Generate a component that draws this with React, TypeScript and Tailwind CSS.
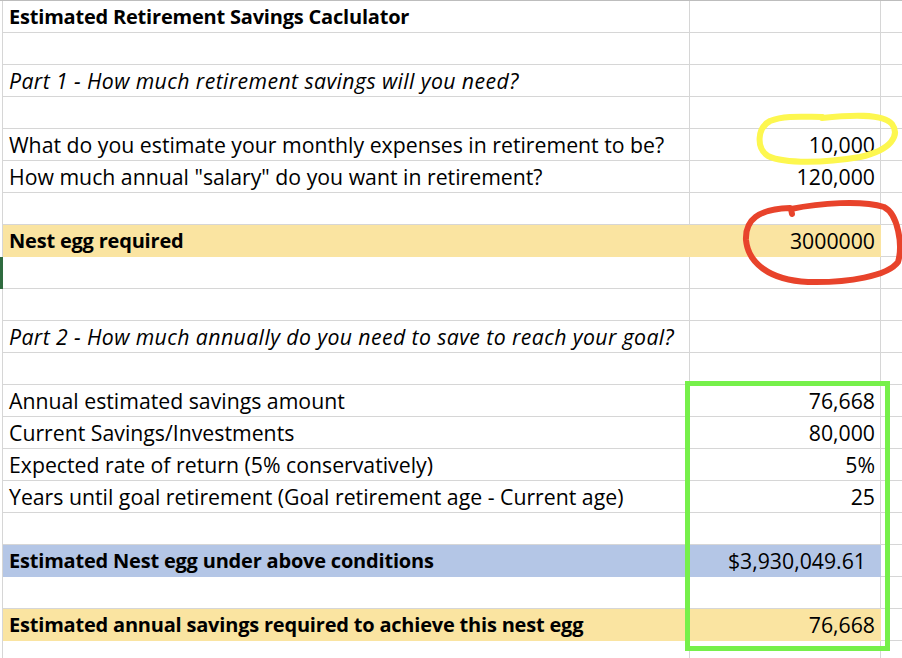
import React from "react";

type Row = {
  label?: string;
  value?: string;
  style?: "bold" | "italic";
  fill?: "yellow" | "blue";
  valuePad?: boolean;
};

const rows: Row[] = [
  { label: "Estimated Retirement Savings Caclulator", style: "bold" },
  {},
  { label: "Part 1 - How much retirement savings will you need?", style: "italic" },
  {},
  { label: "What do you estimate your monthly expenses in retirement to be?", value: "10,000" },
  { label: 'How much annual "salary" do you want in retirement?', value: "120,000" },
  {},
  { label: "Nest egg required", value: "3000000", style: "bold", fill: "yellow" },
  {},
  {},
  { label: "Part 2 - How much annually do you need to save to reach your goal?", style: "italic" },
  {},
  { label: "Annual estimated savings amount", value: "76,668" },
  { label: "Current Savings/Investments", value: "80,000" },
  { label: "Expected rate of return (5% conservatively)", value: "5%" },
  { label: "Years until goal retirement (Goal retirement age - Current age)", value: "25" },
  {},
  { label: "Estimated Nest egg under above conditions", value: "$3,930,049.61", style: "bold", fill: "blue", valuePad: true },
  {},
  { label: "Estimated annual savings required to achieve this nest egg", value: "76,668", style: "bold", fill: "yellow" },
  {},
];

function SheetRow({ row, index }: { row: Row; index: number }) {
  const fillBg =
    row.fill === "yellow" ? "bg-[#fae4a1]" : row.fill === "blue" ? "bg-[#b4c6e6]" : "bg-white";
  const lineColor =
    row.fill === "yellow" ? "border-[#fae4a1]" : row.fill === "blue" ? "border-[#b4c6e6]" : "border-[#d6d6d6]";
  const labelStyle =
    row.style === "bold"
      ? "font-bold text-[20px] tracking-[-0.2px]"
      : row.style === "italic"
        ? "italic tracking-[0.4px]"
        : "";

  return (
    <div className="flex h-[32px]">
      <div className="relative w-[2px] shrink-0 bg-white">
        {index === 8 ? <div className="absolute left-0 top-0 h-[32px] w-[3px] bg-[#2f6b3f]" /> : null}
      </div>
      <div className="w-[1px] shrink-0 bg-[#d6d6d6]" />
      <div
        className={`flex w-[686px] shrink-0 items-center border-b pl-[6px] ${lineColor} ${fillBg}`}
      >
        <span className={`whitespace-nowrap ${labelStyle}`}>{row.label}</span>
      </div>
      <div
        className={`flex w-[192px] shrink-0 items-center justify-end border-b border-l border-r ${lineColor} ${fillBg} ${
          row.valuePad ? "pr-[14px]" : "pr-[5px]"
        }`}
      >
        <span>{row.value}</span>
      </div>
      <div className="flex-1 border-b border-[#d6d6d6] bg-white" />
    </div>
  );
}

export default function App() {
  return (
    <div
      className="relative h-[658px] w-[902px] overflow-hidden bg-white text-[21.25px] text-black"
      style={{ fontFamily: "'Open Sans', Lato, sans-serif" }}
    >
      <div className="h-[1px] bg-[#bdbdbd]" />
      {rows.map((row, i) => (
        <SheetRow key={i} row={row} index={i} />
      ))}

      {/* hand-drawn annotations */}
      <svg className="pointer-events-none absolute left-0 top-0" width="902" height="658" viewBox="0 0 902 658">
        <path
          d="M822 118 C850 115 882 113 892 124 C900 135 892 150 860 157 C825 163 785 164 768 156 C756 148 757 128 770 121 C785 115 805 117 822 117"
          fill="none"
          stroke="#fdf74f"
          strokeWidth="6"
          strokeLinecap="round"
          strokeLinejoin="round"
        />
        <path
          d="M792 214 L791 209 C820 203 862 200 884 207 C898 214 903 245 898 262 C888 276 848 283 808 282 C768 280 748 262 746 240 C745 220 758 209 790 208"
          fill="none"
          stroke="#e8432b"
          strokeWidth="6"
          strokeLinecap="round"
          strokeLinejoin="round"
        />
        <rect x="687.5" y="383.5" width="200" height="265" fill="none" stroke="#76f04a" strokeWidth="5" />
      </svg>
    </div>
  );
}
